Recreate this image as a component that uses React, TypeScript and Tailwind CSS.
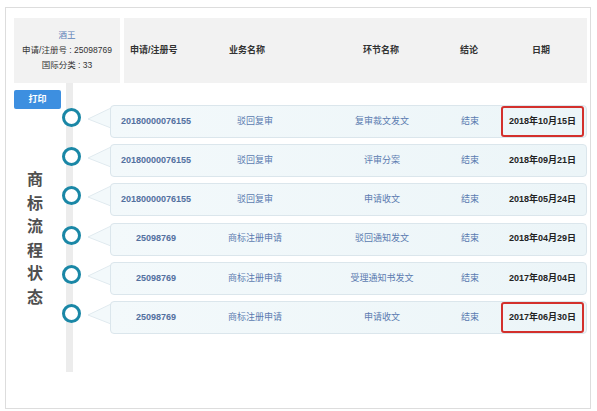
import React from 'react'

type Step = {
  regNo: string
  business: string
  stage: string
  result: string
  date: string
  mark?: boolean
}

const steps: Step[] = [
  { regNo: '20180000076155', business: '驳回复审', stage: '复审裁文发文', result: '结束', date: '2018年10月15日', mark: true },
  { regNo: '20180000076155', business: '驳回复审', stage: '评审分案', result: '结束', date: '2018年09月21日' },
  { regNo: '20180000076155', business: '驳回复审', stage: '申请收文', result: '结束', date: '2018年05月24日' },
  { regNo: '25098769', business: '商标注册申请', stage: '驳回通知发文', result: '结束', date: '2018年04月29日' },
  { regNo: '25098769', business: '商标注册申请', stage: '受理通知书发文', result: '结束', date: '2017年08月04日' },
  { regNo: '25098769', business: '商标注册申请', stage: '申请收文', result: '结束', date: '2017年06月30日', mark: true },
]

const font = { fontFamily: '"Liberation Sans", "Noto Sans CJK SC", sans-serif' }

function Tail() {
  return (
    <svg width="24" height="33" viewBox="0 0 24 33" className="-mr-px shrink-0">
      <polygon points="1,14 24,3 24,23" fill="#f3f9fb" />
      <polyline points="24,3 1,14 24,23" fill="none" stroke="#e0eaef" strokeWidth="1" />
    </svg>
  )
}

function StepRow({ s }: { s: Step }) {
  return (
    <div className="flex h-[33px] items-start">
      <div className="w-[26px] shrink-0 pl-px pt-[3px]">
        <div className="relative z-10 h-[19px] w-[19px] rounded-full border-[3.5px] border-[#1a87a6] bg-white" />
      </div>
      <Tail />
      <div className="grid h-full flex-1 grid-cols-[90px_108px_146px_30px_1fr] items-center rounded-[4px] border border-[#dbe6ec] bg-gradient-to-r from-[#f3f9fb] to-[#ecf5f8] text-[9px]">
        <div className="text-center font-bold text-[#52709f]">{s.regNo}</div>
        <div className="text-center text-[#5b7bb0]">{s.business}</div>
        <div className="text-center text-[#5b7bb0]">{s.stage}</div>
        <div className="text-center text-[#5b7bb0]">{s.result}</div>
        <div className="flex h-full pl-[16px] pr-[2px]">
          <div
            className={
              'flex flex-1 items-center justify-center rounded-[3px] border-2 font-bold text-[#222] ' +
              (s.mark ? 'border-[#d3302c]' : 'border-transparent')
            }
          >
            {s.date}
          </div>
        </div>
      </div>
    </div>
  )
}

export default function App() {
  return (
    <div className="h-[411px] w-[597px] bg-white pl-[5px] pt-[7px]" style={font}>
      <div className="h-[402px] w-[586px] border border-[#dddddd] pl-[8px] pr-[3px] pt-[10px]">
        {/* header */}
        <div className="flex h-[65px] gap-[4px]">
          <div className="flex w-[106px] flex-col items-center justify-center bg-[#f2f2f2] text-[8.5px] leading-[15px] text-[#333]">
            <div className="text-[#5a7fb8]">酒王</div>
            <div>申请/注册号 : 25098769</div>
            <div>国际分类 : 33</div>
          </div>
          <div className="grid flex-1 grid-cols-[58px_130px_138px_38px_1fr] items-center bg-[#f2f2f2] text-[9px] font-bold text-[#333]">
            <div className="pl-[6px]">申请/注册号</div>
            <div className="text-center">业务名称</div>
            <div className="text-center">环节名称</div>
            <div className="text-center">结论</div>
            <div className="pl-[7px] text-center">日期</div>
          </div>
        </div>

        {/* timeline */}
        <div className="relative flex">
          <div className="absolute left-[52px] top-0 h-[289px] w-[7px] bg-[#ececec]" />
          <div className="relative w-[47px] shrink-0">
            <button
              type="button"
              className="mt-[7px] h-[19px] w-[47px] rounded-[2px] bg-[#3d8fe0] text-[9px] font-bold text-white"
            >
              打印
            </button>
            <div className="mt-[59px] flex flex-col items-center pr-[5px] text-[16px] font-bold leading-[23.6px] text-[#4f4f4f]">
              {'商标流程状态'.split('').map((c) => (
                <span key={c}>{c}</span>
              ))}
            </div>
          </div>
          <div className="flex flex-1 flex-col gap-[6.2px] pt-[22px]">
            {steps.map((s, i) => (
              <StepRow key={i} s={s} />
            ))}
          </div>
        </div>
      </div>
    </div>
  )
}
